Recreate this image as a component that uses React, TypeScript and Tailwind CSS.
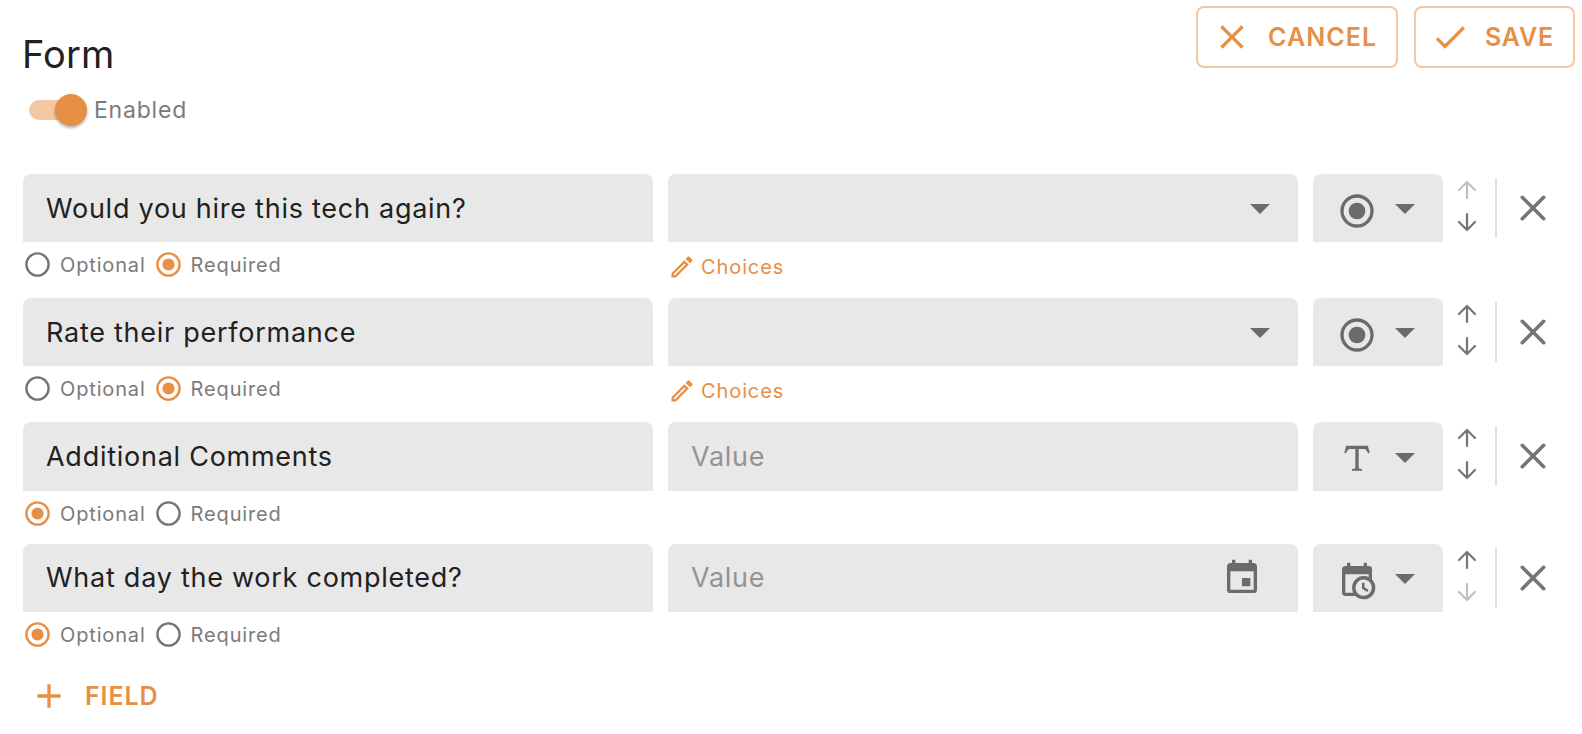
import { useState } from 'react';
import clsx from 'clsx';

type FieldType = 'radio' | 'text' | 'date';

interface FormField {
  id: number;
  label: string;
  type: FieldType;
  required: boolean;
}

const initialFields: FormField[] = [
  { id: 1, label: 'Would you hire this tech again?', type: 'radio', required: true },
  { id: 2, label: 'Rate their performance', type: 'radio', required: true },
  { id: 3, label: 'Additional Comments', type: 'text', required: false },
  { id: 4, label: 'What day the work completed?', type: 'date', required: false },
];

const icons = {
  close:
    'M19,6.41L17.59,5L12,10.59L6.41,5L5,6.41L10.59,12L5,17.59L6.41,19L12,13.41L17.59,19L19,17.59L13.41,12L19,6.41Z',
  check: 'M21,7L9,19L3.5,13.5L4.91,12.09L9,16.17L19.59,5.59L21,7Z',
  plus: 'M19,13H13V19H11V13H5V11H11V5H13V11H19V13Z',
  pencil:
    'M14.06,9L15,9.94L5.92,19H5V18.08L14.06,9M17.66,3C17.41,3 17.15,3.1 16.96,3.29L15.13,5.12L18.88,8.87L20.71,7.04C21.1,6.65 21.1,6 20.71,5.63L18.37,3.29C18.17,3.09 17.92,3 17.66,3M14.06,6.19L3,17.25V21H6.75L17.81,9.94L14.06,6.19Z',
  radio:
    'M12,20A8,8 0 0,1 4,12A8,8 0 0,1 12,4A8,8 0 0,1 20,12A8,8 0 0,1 12,20M12,2A10,10 0 0,0 2,12A10,10 0 0,0 12,22A10,10 0 0,0 22,12A10,10 0 0,0 12,2M12,7A5,5 0 0,0 7,12A5,5 0 0,0 12,17A5,5 0 0,0 17,12A5,5 0 0,0 12,7Z',
  text: 'M18.5,4L19.66,8.35L18.7,8.61C18.25,7.74 17.79,6.87 17.26,6.43C16.73,6 16.11,6 15.5,6H13V16.5C13,17 13,17.5 13.33,17.75C13.67,18 14.33,18 15,18V19H9V18C9.67,18 10.33,18 10.67,17.75C11,17.5 11,17 11,16.5V6H8.5C7.89,6 7.27,6 6.74,6.43C6.21,6.87 5.75,7.74 5.3,8.61L4.34,8.35L5.5,4H18.5Z',
  date: 'M15,13H16.5V15.82L18.94,17.23L18.19,18.53L15,16.69V13M19,8H5V19H9.67C9.24,18.09 9,17.07 9,16A7,7 0 0,1 16,9C17.07,9 18.09,9.24 19,9.67V8M5,21C3.89,21 3,20.1 3,19V5C3,3.89 3.89,3 5,3H6V1H8V3H16V1H18V3H19A2,2 0 0,1 21,5V11.1C22.24,12.36 23,14.09 23,16A7,7 0 0,1 16,23C14.09,23 12.36,22.24 11.1,21H5M16,11.15A4.85,4.85 0 0,0 11.15,16C11.15,18.68 13.32,20.85 16,20.85A4.85,4.85 0 0,0 20.85,16C20.85,13.32 18.68,11.15 16,11.15Z',
  calendar:
    'M19,19H5V8H19M16,1V3H8V1H6V3H5C3.89,3 3,3.89 3,5V19A2,2 0 0,0 5,21H19A2,2 0 0,0 21,19V5C21,3.89 20.1,3 19,3H18V1M17,12H12V17H17V12Z',
};

const Icon = ({ name, className }: { name: keyof typeof icons; className?: string }) => (
  <svg viewBox="0 0 24 24" fill="currentColor" className={clsx('shrink-0', className ?? 'size-10')}>
    <path d={icons[name]} />
  </svg>
);

const Caret = () => (
  <svg viewBox="0 0 20 10" fill="currentColor" className="mt-[2px] h-[10px] w-5 shrink-0">
    <path d="M0 0h20L10 10z" />
  </svg>
);

const Arrow = ({ down }: { down?: boolean }) => (
  <svg
    viewBox="0 0 20 20"
    fill="none"
    stroke="currentColor"
    strokeWidth="2.2"
    strokeLinecap="round"
    strokeLinejoin="round"
    className={clsx('size-5', down && 'rotate-180')}
  >
    <path d="M10 18V2M2 10l8-8 8 8" />
  </svg>
);

interface RadioOptionProps {
  label: string;
  checked: boolean;
  onSelect: () => void;
}

const RadioOption = ({ label, checked, onSelect }: RadioOptionProps) => (
  <button type="button" role="radio" aria-checked={checked} onClick={onSelect} className="flex items-center gap-[10px]">
    <svg viewBox="0 0 25 25" className={clsx('size-[25px]', checked ? 'text-[#e78f45]' : 'text-[#757575]')}>
      <circle cx="12.5" cy="12.5" r="11.1" fill="none" stroke="currentColor" strokeWidth="2.4" />
      {checked && <circle cx="12.5" cy="12.5" r="6.1" fill="currentColor" />}
    </svg>
    <span className="text-[20px] leading-6 tracking-[0.85px] text-[#7b7b7b]">{label}</span>
  </button>
);

interface FieldRowProps {
  field: FormField;
  isFirst: boolean;
  isLast: boolean;
  onRequiredChange: (required: boolean) => void;
  onMove: (step: number) => void;
  onRemove: () => void;
}

const FieldRow = ({ field, isFirst, isLast, onRequiredChange, onMove, onRemove }: FieldRowProps) => {
  const hasChoices = field.type === 'radio';
  const boxClass = clsx('flex items-center rounded-t-lg bg-[#e8e8e8]', field.type === 'text' ? 'h-[69px]' : 'h-[68px]');

  return (
    <div className={clsx('flex items-start', hasChoices ? 'h-[124px]' : 'h-[122px]')}>
      <div className="w-[630px]">
        <div
          className={clsx(
            boxClass,
            'pl-[23px] pr-6 text-[27px] tracking-[0.74px] text-[#212121]',
            hasChoices && 'pt-[3px]',
            field.type === 'text' && 'pt-[2px]',
          )}
        >
          {field.label}
        </div>
        <div role="radiogroup" className="flex h-[45px] items-center gap-[10px] pl-[2px]">
          <RadioOption label="Optional" checked={!field.required} onSelect={() => onRequiredChange(false)} />
          <RadioOption label="Required" checked={field.required} onSelect={() => onRequiredChange(true)} />
        </div>
      </div>

      <div className="ml-[15px] w-[630px]">
        <div
          className={clsx(
            boxClass,
            'justify-between pl-[23px] pr-[28px] text-[27px] tracking-[0.7px] text-[#939393]',
            field.type === 'text' && 'pt-[2px]',
          )}
        >
          <span>{hasChoices ? '' : 'Value'}</span>
          <span className="flex items-center text-[#6b6b6b]">
            {hasChoices && <Caret />}
            {field.type === 'date' && <Icon name="calendar" className="mr-2 size-10" />}
          </span>
        </div>
        {hasChoices && (
          <button type="button" className="flex h-[49px] items-center gap-[5px] text-[#e78f45]">
            <Icon name="pencil" className="size-[28px]" />
            <span className="text-[20px] leading-6 tracking-[0.9px]">Choices</span>
          </button>
        )}
      </div>

      <button type="button" className={clsx(boxClass, 'ml-[15px] w-[130px] gap-[18px] pl-6 text-[#6b6b6b]')}>
        <Icon name={field.type} className="mt-[5px] size-10" />
        <Caret />
      </button>

      <div className="ml-[14px] flex h-[64px] flex-col items-center justify-center gap-3 text-[#757575]">
        <button type="button" disabled={isFirst} onClick={() => onMove(-1)} className="disabled:text-[#c0c0c0]">
          <Arrow />
        </button>
        <button type="button" disabled={isLast} onClick={() => onMove(1)} className="disabled:text-[#c0c0c0]">
          <Arrow down />
        </button>
      </div>

      <div className="ml-[18px] mt-1 h-[60px] w-[2px] bg-[#e0e0e0]" />

      <button type="button" aria-label="Remove field" onClick={onRemove} className="ml-[22px] mt-[20px] text-[#757575]">
        <svg viewBox="0 0 28 28" fill="none" stroke="currentColor" strokeWidth="3.6" strokeLinecap="round" className="size-7">
          <path d="M3.3 3.3l21.4 21.4M24.7 3.3L3.3 24.7" />
        </svg>
      </button>
    </div>
  );
};

export default function App() {
  const [fields, setFields] = useState(initialFields);
  const [enabled, setEnabled] = useState(true);

  const setRequired = (id: number, required: boolean) => {
    setFields((prev) => prev.map((item) => (item.id === id ? { ...item, required } : item)));
  };

  const moveField = (index: number, step: number) => {
    setFields((prev) => {
      const next = [...prev];
      const [item] = next.splice(index, 1);
      next.splice(index + step, 0, item);
      return next;
    });
  };

  const addField = () => {
    setFields((prev) => [...prev, { id: Date.now(), label: '', type: 'text', required: false }]);
  };

  return (
    <main className="h-[734px] w-[1582px] overflow-hidden bg-white pl-[23px] font-['Inter',sans-serif]">
      <header className="flex h-[174px] items-start justify-between pr-[7px]">
        <div>
          <h1 className="-ml-px mt-[30px] h-12 text-[38px] leading-[48px] tracking-[0.1px] text-[#212121]">Form</h1>
          <button
            type="button"
            role="switch"
            aria-checked={enabled}
            onClick={() => setEnabled(!enabled)}
            className="mt-4 flex h-8 items-center pl-[6px]"
          >
            <span className={clsx('flex h-5 w-[52px] items-center rounded-full', enabled ? 'bg-[#f3c7a2]' : 'bg-[#bdbdbd]')}>
              <span
                className={clsx(
                  'size-8 shrink-0 rounded-full shadow-[0_2px_3px_rgba(0,0,0,0.3)]',
                  enabled ? 'ml-[26px] bg-[#e78f45]' : '-ml-1 bg-[#fafafa]',
                )}
              />
            </span>
            <span className="ml-[13px] text-[23px] leading-8 tracking-[0.8px] text-[#7b7b7b]">Enabled</span>
          </button>
        </div>

        <div className="mt-[6px] flex gap-4 text-[25px] font-semibold text-[#e78f45]">
          <button type="button" className="flex h-[62px] w-[202px] items-center gap-4 rounded-lg border-2 border-[#f3c7a2] pl-[14px]">
            <Icon name="close" />
            <span className="pt-[2px] tracking-[1.1px]">CANCEL</span>
          </button>
          <button type="button" className="flex h-[62px] w-[161px] items-center gap-[15px] rounded-lg border-2 border-[#f3c7a2] pl-[14px]">
            <Icon name="check" />
            <span className="pt-[2px] tracking-[0.8px]">SAVE</span>
          </button>
        </div>
      </header>

      <section>
        {fields.map((field, index) => (
          <FieldRow
            key={field.id}
            field={field}
            isFirst={index === 0}
            isLast={index === fields.length - 1}
            onRequiredChange={(required) => setRequired(field.id, required)}
            onMove={(step) => moveField(index, step)}
            onRemove={() => setFields((prev) => prev.filter((item) => item.id !== field.id))}
          />
        ))}
      </section>

      <button
        type="button"
        onClick={addField}
        className="ml-[6px] mt-[10px] flex h-10 items-center gap-4 text-[25px] font-semibold tracking-[0.9px] text-[#e78f45]"
      >
        <Icon name="plus" />
        <span className="pt-[2px]">FIELD</span>
      </button>
    </main>
  );
}
